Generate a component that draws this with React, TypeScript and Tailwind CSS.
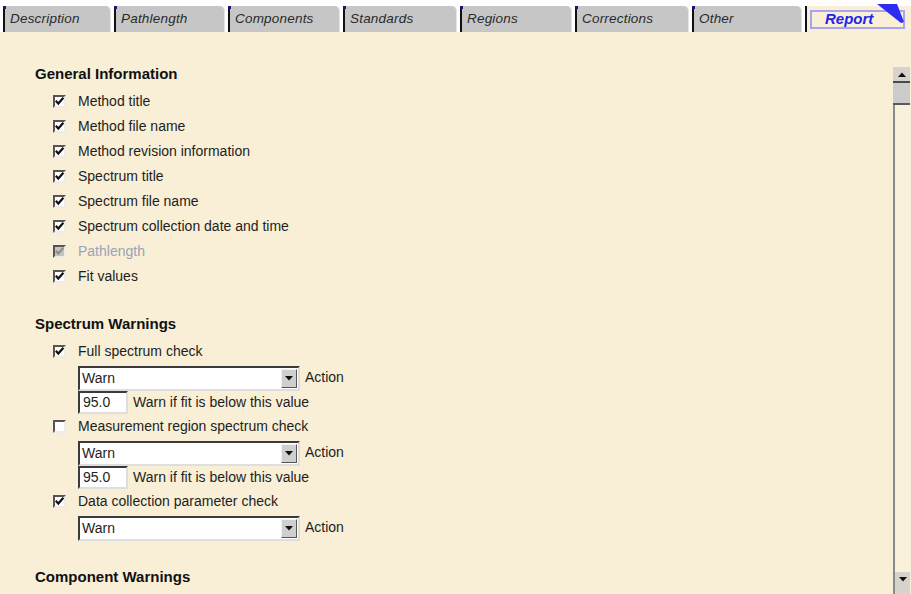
import { ReactNode } from "react";

// tab strip: width of each tab includes the spacing before the next one
const tabs = [
  { label: "Description", w: "w-[111px]" },
  { label: "Pathlength", w: "w-[114px]" },
  { label: "Components", w: "w-[115px]" },
  { label: "Standards", w: "w-[117px]" },
  { label: "Regions", w: "w-[115px]" },
  { label: "Corrections", w: "w-[117px]" },
  { label: "Other", w: "w-[113px]" },
];

const generalItems = [
  { label: "Method title", checked: true },
  { label: "Method file name", checked: true },
  { label: "Method revision information", checked: true },
  { label: "Spectrum title", checked: true },
  { label: "Spectrum file name", checked: true },
  { label: "Spectrum collection date and time", checked: true },
  { label: "Pathlength", checked: true, disabled: true },
  { label: "Fit values", checked: true },
];

function CheckBox({ checked, disabled }: { checked?: boolean; disabled?: boolean }) {
  return (
    <span
      className={
        "w-[13px] h-[13px] flex items-center justify-center border-2 border-t-[#555] border-l-[#555] border-r-[#ececec] border-b-[#ececec] " +
        (disabled ? "bg-[#c4c4c4]" : "bg-white")
      }
    >
      {checked && (
        <svg viewBox="0 0 9 9" className="w-[9px] h-[9px]">
          <path
            d="M0.8 3.8 L3.3 6.6 L8.4 0.8"
            fill="none"
            stroke={disabled ? "#8e8e8e" : "#111"}
            strokeWidth="2.2"
          />
        </svg>
      )}
    </span>
  );
}

function CheckRow({ label, checked, disabled }: { label: string; checked?: boolean; disabled?: boolean }) {
  return (
    <div className="h-[25px] flex items-center pl-[18px]">
      <CheckBox checked={checked} disabled={disabled} />
      <span className={"ml-[12px] " + (disabled ? "text-[#9ba2b6]" : "text-[#1e1e1e]")}>{label}</span>
    </div>
  );
}

function Heading({ children }: { children: ReactNode }) {
  return (
    <div className="h-[25px] mb-[2px] flex items-center font-bold text-[15px] text-[#111]">{children}</div>
  );
}

function ActionSelect() {
  return (
    <div className="h-[25px] flex items-start pl-[43px]">
      <div className="w-[222px] h-[25px] bg-white flex items-center border-2 border-t-[#3a3a3a] border-l-[#3a3a3a] border-r-[#dedede] border-b-[#dedede]">
        <span className="flex-1 pl-[2px] text-[#1e1e1e]">Warn</span>
        <span className="w-[16px] h-[19px] mr-[1px] bg-[#cfcfcf] flex items-center justify-center border border-t-[#f2f2f2] border-l-[#f2f2f2] border-r-[#555] border-b-[#555]">
          <svg viewBox="0 0 8 5" className="w-[8px] h-[5px]">
            <path d="M0 0 L8 0 L4 4.5 Z" fill="#111" />
          </svg>
        </span>
      </div>
      <span className="ml-[5px] mt-[1px] text-[#1e1e1e]">Action</span>
    </div>
  );
}

function FitInput() {
  return (
    <div className="h-[23px] flex items-center pl-[43px]">
      <div className="w-[50px] h-[23px] bg-white flex items-center pl-[3px] border-2 border-t-[#3a3a3a] border-l-[#3a3a3a] border-r-[#dedede] border-b-[#dedede] text-[#1e1e1e]">
        95.0
      </div>
      <span className="ml-[5px] text-[#1e1e1e]">Warn if fit is below this value</span>
    </div>
  );
}

function ScrollBar() {
  return (
    <div className="w-[17px] mt-[35px] mr-[1px] flex flex-col">
      <div className="h-[16px] bg-[#d6d3cc] flex items-center justify-center border-b-2 border-[#4a4a4a]">
        <svg viewBox="0 0 8 5" className="w-[8px] h-[5px]">
          <path d="M0 5 L8 5 L4 0.5 Z" fill="#111" />
        </svg>
      </div>
      <div className="h-[22px] bg-[#cbcbcb] border-b-2 border-[#5a5a5a]" />
      <div className="flex-1 border-l-2 border-[#8a8a8a] bg-[#f9f1dc]" />
      <div className="h-[22px] bg-[#d6d3cc] flex items-start pt-[5px] justify-center border-l-2 border-[#8a8a8a]">
        <svg viewBox="0 0 8 5" className="w-[8px] h-[5px]">
          <path d="M0 0 L8 0 L4 4.5 Z" fill="#111" />
        </svg>
      </div>
    </div>
  );
}

export default function App() {
  return (
    <div
      className="w-[911px] h-[594px] overflow-hidden bg-white flex flex-col text-[14px]"
      style={{ fontFamily: '"Liberation Sans", Arial, sans-serif' }}
    >
      {/* tab strip */}
      <div className="h-[32px] pt-[6px] pl-[3px] flex items-stretch">
        {tabs.map((t) => (
          <div key={t.label} className={t.w + " pr-[3px] flex"}>
            <div className="relative flex-1 bg-[#c6c6c6] border-l-2 border-[#111] border-r border-r-[#e6e6e6] rounded-tr-[5px] flex items-center pl-[5px] italic text-[13.5px] text-[#2a2a2a] tracking-[0.2px]">
              <span className="absolute -left-[2px] top-0 w-[3px] h-[3px] bg-[#1a1a6e]" />
              {t.label}
            </div>
          </div>
        ))}
        <div className="relative flex-1 bg-[#f8efd6] border-l-2 border-[#111] flex pt-[4px] pb-[3px]">
          <div className="ml-[3px] w-[95px] border-2 border-[#a9a4f2] flex items-center pl-[13px] italic font-bold text-[15px] text-[#2323f0]">
            Report
          </div>
          <svg className="absolute left-[68px] -top-[3px]" width="32" height="22" viewBox="0 0 32 22">
            <path d="M2 1 L22 1 L29 19 L26 20 Z" fill="#2c2cf2" />
          </svg>
        </div>
      </div>

      {/* report options */}
      <div className="flex-1 bg-[#f8efd6] flex">
        <div className="flex-1 pl-[35px] pt-[30px]">
          <Heading>General Information</Heading>
          {generalItems.map((it) => (
            <CheckRow key={it.label} label={it.label} checked={it.checked} disabled={it.disabled} />
          ))}

          <div className="h-[23px]" />
          <Heading>Spectrum Warnings</Heading>
          <CheckRow label="Full spectrum check" checked />
          <div className="h-[2px]" />
          <ActionSelect />
          <FitInput />
          <CheckRow label="Measurement region spectrum check" />
          <div className="h-[2px]" />
          <ActionSelect />
          <FitInput />
          <CheckRow label="Data collection parameter check" checked />
          <div className="h-[2px]" />
          <ActionSelect />

          <div className="h-[24px]" />
          <Heading>Component Warnings</Heading>
        </div>
        <ScrollBar />
      </div>
    </div>
  );
}
